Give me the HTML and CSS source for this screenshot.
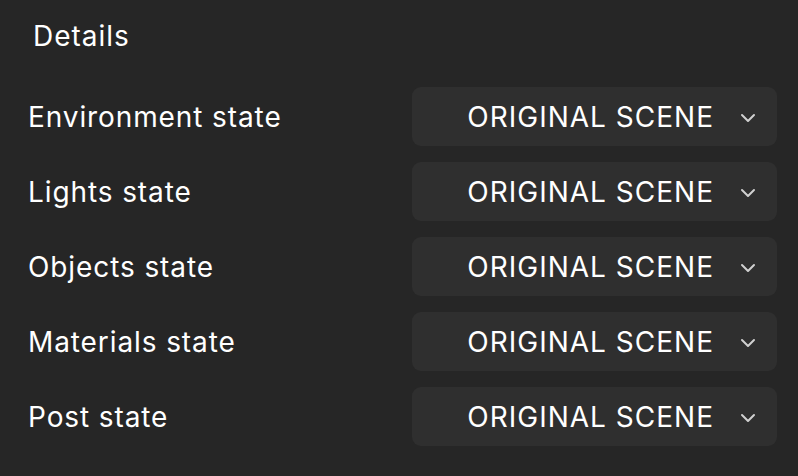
FILE: index.html
```html
<!DOCTYPE html>
<html>
<head>
<meta charset="utf-8">
<link rel="stylesheet" href="styles.css">
</head>
<body>
<div class="panel">
  <div class="title">Details</div>
  <div class="rows">
    <div class="row">
      <div class="label">Environment state</div>
      <div class="select"><span class="value">ORIGINAL SCENE</span><svg class="chev" viewBox="0 0 16 10" width="16" height="10"><path d="M2 2 L8 8 L14 2" fill="none" stroke="#d0d0d0" stroke-width="2" stroke-linecap="round" stroke-linejoin="round"/></svg></div>
    </div>
    <div class="row">
      <div class="label">Lights state</div>
      <div class="select"><span class="value">ORIGINAL SCENE</span><svg class="chev" viewBox="0 0 16 10" width="16" height="10"><path d="M2 2 L8 8 L14 2" fill="none" stroke="#d0d0d0" stroke-width="2" stroke-linecap="round" stroke-linejoin="round"/></svg></div>
    </div>
    <div class="row">
      <div class="label">Objects state</div>
      <div class="select"><span class="value">ORIGINAL SCENE</span><svg class="chev" viewBox="0 0 16 10" width="16" height="10"><path d="M2 2 L8 8 L14 2" fill="none" stroke="#d0d0d0" stroke-width="2" stroke-linecap="round" stroke-linejoin="round"/></svg></div>
    </div>
    <div class="row">
      <div class="label">Materials state</div>
      <div class="select"><span class="value">ORIGINAL SCENE</span><svg class="chev" viewBox="0 0 16 10" width="16" height="10"><path d="M2 2 L8 8 L14 2" fill="none" stroke="#d0d0d0" stroke-width="2" stroke-linecap="round" stroke-linejoin="round"/></svg></div>
    </div>
    <div class="row">
      <div class="label">Post state</div>
      <div class="select"><span class="value">ORIGINAL SCENE</span><svg class="chev" viewBox="0 0 16 10" width="16" height="10"><path d="M2 2 L8 8 L14 2" fill="none" stroke="#d0d0d0" stroke-width="2" stroke-linecap="round" stroke-linejoin="round"/></svg></div>
    </div>
  </div>
</div>
</body>
</html>
```
FILE: styles.css
```css
html, body {
  margin: 0;
  padding: 0;
  background: #262626;
}
body {
  width: 798px;
  height: 476px;
  overflow: hidden;
  font-family: Inter, "Noto Sans", sans-serif;
  color: #ffffff;
}
.panel {
  padding: 16px 21px 0 28px;
}
.title {
  font-size: 28px;
  letter-spacing: 1px;
  line-height: 40px;
  padding-left: 5px;
}
.rows {
  margin-top: 31px;
  display: flex;
  flex-direction: column;
  gap: 16px;
}
.row {
  display: flex;
  align-items: center;
  justify-content: space-between;
  height: 59px;
}
.label {
  font-size: 28px;
  letter-spacing: 0.9px;
}
.select {
  width: 365px;
  height: 59px;
  box-sizing: border-box;
  background: #2f2f2f;
  border-radius: 9px;
  display: flex;
  align-items: center;
  justify-content: flex-end;
  padding-right: 21px;
}
.value {
  font-size: 28px;
  letter-spacing: 1px;
  margin-right: 26px;
}
.chev {
  display: block;
  margin-top: 3px;
}
```
